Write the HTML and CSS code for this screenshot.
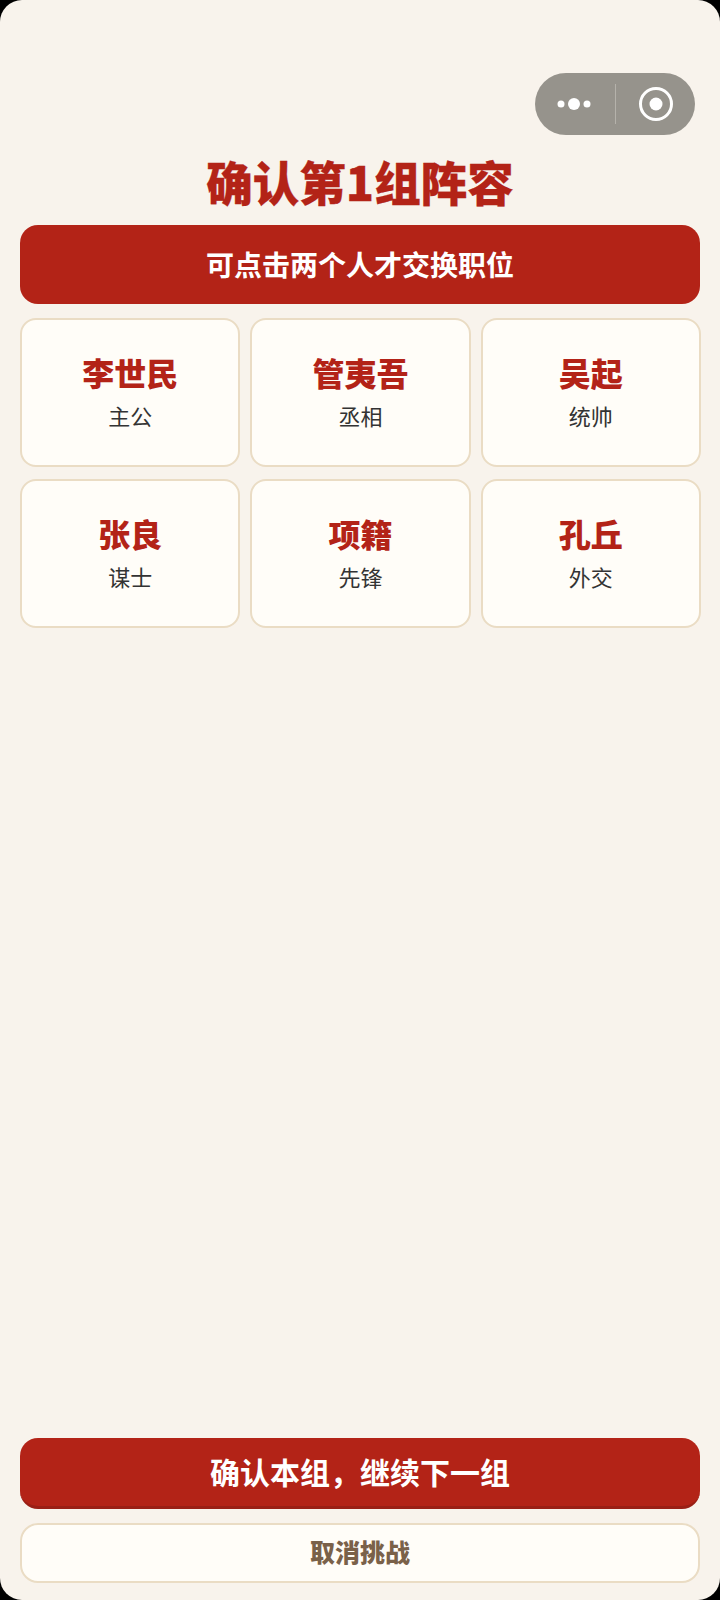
FILE: index.html
```html
<!DOCTYPE html>
<html lang="zh-CN">
<head>
    <meta charset="UTF-8">
    <meta name="viewport" content="width=device-width, initial-scale=1.0">
    <title>确认阵容</title>
    <link rel="stylesheet" href="styles.css">
</head>
<body>
    <div class="page">
        <!-- Top capsule -->
        <div class="top-bar">
            <div class="capsule">
                <div class="capsule-side">
                    <svg class="icon-more" width="36" height="14" viewBox="0 0 36 14">
                        <circle cx="5" cy="7" r="3.5" fill="#fff"/>
                        <circle cx="18" cy="7" r="6" fill="#fff"/>
                        <circle cx="31" cy="7" r="3.5" fill="#fff"/>
                    </svg>
                </div>
                <div class="capsule-line"></div>
                <div class="capsule-side">
                    <svg class="icon-target" width="36" height="36" viewBox="0 0 36 36">
                        <circle cx="18" cy="18" r="15.5" fill="none" stroke="#fff" stroke-width="3"/>
                        <circle cx="18" cy="18" r="6.5" fill="#fff"/>
                    </svg>
                </div>
            </div>
        </div>

        <h1 class="title">确认第1组阵容</h1>
        <div class="hint">可点击两个人才交换职位</div>

        <div class="grid">
            <div class="card"><div class="name">李世民</div><div class="role">主公</div></div>
            <div class="card"><div class="name">管夷吾</div><div class="role">丞相</div></div>
            <div class="card"><div class="name">吴起</div><div class="role">统帅</div></div>
            <div class="card"><div class="name">张良</div><div class="role">谋士</div></div>
            <div class="card"><div class="name">项籍</div><div class="role">先锋</div></div>
            <div class="card"><div class="name">孔丘</div><div class="role">外交</div></div>
        </div>

        <div class="actions">
            <button class="btn btn-confirm">确认本组，继续下一组</button>
            <button class="btn btn-cancel">取消挑战</button>
        </div>
    </div>
</body>
</html>
```

FILE: styles.css
```css
html {
    background: #000;
}
body {
    margin: 0;
    font-family: "Noto Sans CJK SC", "Noto Sans", sans-serif;
}
.page {
    box-sizing: border-box;
    height: 1600px;
    padding: 73px 20px 17px;
    display: flex;
    flex-direction: column;
    background: #f8f3ec;
    border-radius: 22px;
    overflow: hidden;
}
.top-bar {
    display: flex;
    justify-content: flex-end;
    padding-right: 5px;
}
.capsule {
    width: 160px;
    height: 62px;
    border-radius: 31px;
    background: #96938c;
    display: flex;
    align-items: center;
}
.capsule-side {
    flex: 1;
    display: flex;
    justify-content: center;
    align-items: center;
}
.icon-more {
    margin-right: 2px;
}
.icon-target {
    margin-left: 1px;
}
.capsule-line {
    width: 1px;
    height: 40px;
    background: #b5b2ab;
}
.title {
    margin: 14px 0 0;
    height: 64px;
    line-height: 64px;
    font-size: 46.5px;
    font-weight: 900;
    -webkit-text-stroke: 0.3px #b32317;
    color: #b32317;
    text-align: center;
}
.hint {
    height: 79px;
    line-height: 79px;
    margin-top: 12px;
    border-radius: 18px;
    background: #b32317;
    color: #fff;
    font-size: 28px;
    font-weight: 700;
    text-align: center;
}
.grid {
    margin: 14px -1px 0 0;
    display: grid;
    grid-template-columns: repeat(3, 1fr);
    gap: 12px 10px;
}
.card {
    box-sizing: border-box;
    height: 149px;
    padding-bottom: 4px;
    border: 2px solid #eadcc4;
    border-radius: 16px;
    background: #fffdf8;
    display: flex;
    flex-direction: column;
    align-items: center;
    justify-content: center;
    gap: 6px;
}
.name {
    font-size: 32px;
    line-height: 42px;
    font-weight: 900;
    color: #b32317;
}
.role {
    font-size: 22px;
    line-height: 32px;
    color: #333;
}
.actions {
    margin-top: auto;
    display: flex;
    flex-direction: column;
    gap: 14px;
}
.btn {
    display: block;
    width: 100%;
    font-family: inherit;
    text-align: center;
}
.btn-confirm {
    height: 71px;
    padding: 0 0 3px;
    border: none;
    border-bottom: 3px solid #9a1f15;
    border-radius: 18px;
    background: #b32317;
    color: #fff;
    font-size: 30px;
    font-weight: 700;
}
.btn-cancel {
    height: 60px;
    padding: 0 0 5px;
    border: 2px solid #eadcc4;
    border-radius: 18px;
    background: #fffdf8;
    color: #7a6149;
    font-size: 25px;
    font-weight: 900;
}
```
